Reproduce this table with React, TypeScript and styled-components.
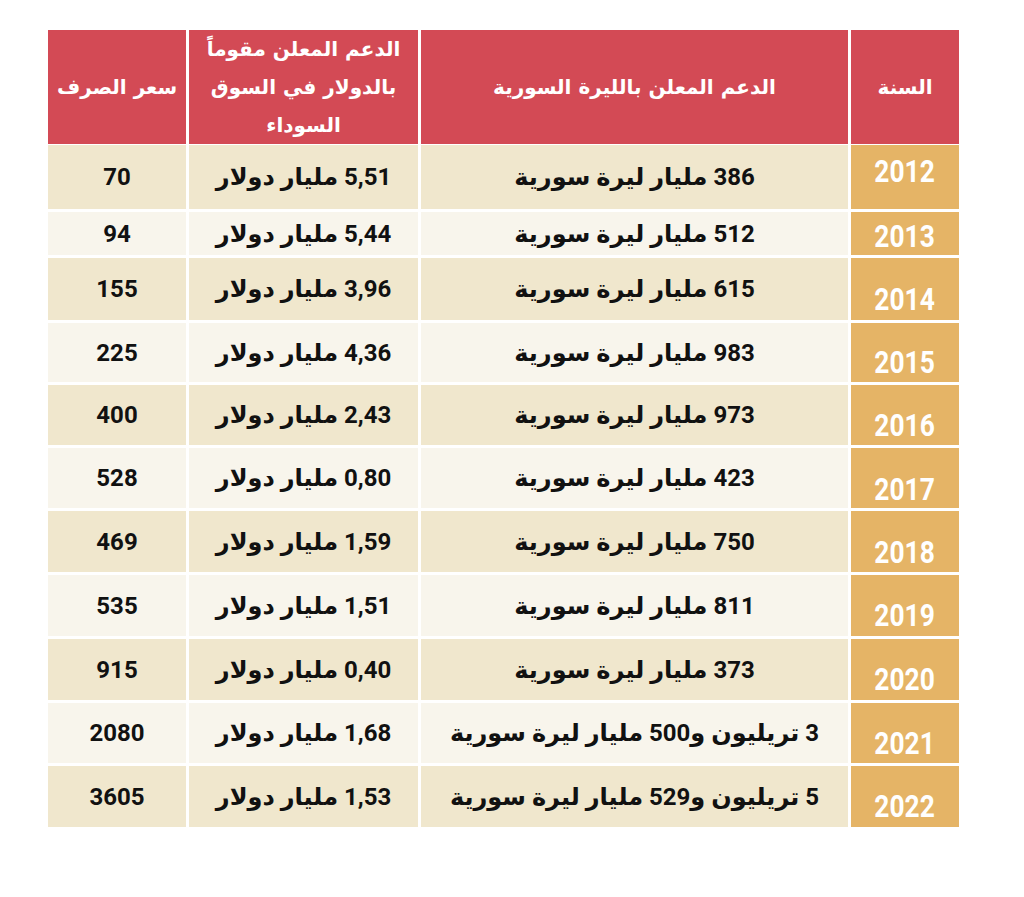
import React from "react";
import styled, { createGlobalStyle } from "styled-components";

const Global = createGlobalStyle`
  html, body { margin: 0; padding: 0; background: #ffffff; }
  body { font-family: Roboto, "DejaVu Sans", sans-serif; }
`;

const Page = styled.div`
  width: 1024px;
  height: 897px;
  padding: 30px 0 0 48px;
  box-sizing: border-box;
  background: #ffffff;
`;

const Table = styled.div`
  width: 911px;
  display: flex;
  flex-direction: column;
  gap: 3px;
  direction: rtl;
`;

const Row = styled.div<{ $h: number }>`
  display: grid;
  grid-template-columns: 108px 427px 229px 138px;
  column-gap: 3px;
  height: ${(p) => p.$h}px;
`;

const HeadCell = styled.div`
  background: #d34a55;
  color: #ffffff;
  display: flex;
  align-items: center;
  justify-content: center;
  text-align: center;
  font-family: "DejaVu Sans", sans-serif;
  font-weight: 700;
  font-size: 20px;
  line-height: 38px;
`;

const YearCell = styled.div<{ $shift: number }>`
  background: #e5b466;
  color: #ffffff;
  display: flex;
  align-items: center;
  justify-content: center;
  box-sizing: border-box;
  padding-top: ${(p) => (p.$shift > 0 ? p.$shift * 2 : 0)}px;
  padding-bottom: ${(p) => (p.$shift < 0 ? -p.$shift * 2 : 0)}px;
`;

const YearText = styled.span`
  display: inline-block;
  font-family: Roboto, sans-serif;
  font-weight: 700;
  font-size: 31px;
  line-height: 1;
  transform: scaleX(0.85);
`;

const DataCell = styled.div<{ $alt: boolean }>`
  background: ${(p) => (p.$alt ? "#f8f5ec" : "#f0e7cd")};
  color: #111111;
  display: flex;
  align-items: center;
  justify-content: center;
  font-family: Roboto, "DejaVu Sans", sans-serif;
  font-weight: 700;
  font-size: 24px;
  white-space: nowrap;
`;

type R = { year: string; syp: string; usd: string; rate: string; h: number; shift: number };

const rows: R[] = [
  { year: "2012", syp: "386 مليار ليرة سورية", usd: "5,51 مليار دولار", rate: "70", h: 64, shift: -6 },
  { year: "2013", syp: "512 مليار ليرة سورية", usd: "5,44 مليار دولار", rate: "94", h: 43, shift: 3 },
  { year: "2014", syp: "615 مليار ليرة سورية", usd: "3,96 مليار دولار", rate: "155", h: 62, shift: 10 },
  { year: "2015", syp: "983 مليار ليرة سورية", usd: "4,36 مليار دولار", rate: "225", h: 59, shift: 10 },
  { year: "2016", syp: "973 مليار ليرة سورية", usd: "2,43 مليار دولار", rate: "400", h: 60, shift: 10 },
  { year: "2017", syp: "423 مليار ليرة سورية", usd: "0,80 مليار دولار", rate: "528", h: 60, shift: 11 },
  { year: "2018", syp: "750 مليار ليرة سورية", usd: "1,59 مليار دولار", rate: "469", h: 61, shift: 11 },
  { year: "2019", syp: "811 مليار ليرة سورية", usd: "1,51 مليار دولار", rate: "535", h: 61, shift: 10 },
  { year: "2020", syp: "373 مليار ليرة سورية", usd: "0,40 مليار دولار", rate: "915", h: 61, shift: 10 },
  { year: "2021", syp: "3 تريليون و500 مليار ليرة سورية", usd: "1,68 مليار دولار", rate: "2080", h: 60, shift: 10 },
  { year: "2022", syp: "5 تريليون و529 مليار ليرة سورية", usd: "1,53 مليار دولار", rate: "3605", h: 61, shift: 10 },
];

export default function App() {
  return (
    <Page>
      <Global />
      <Table>
        <Row $h={112}>
          <HeadCell>السنة</HeadCell>
          <HeadCell>الدعم المعلن بالليرة السورية</HeadCell>
          <HeadCell>
            الدعم المعلن مقوماً
            <br />
            بالدولار في السوق
            <br />
            السوداء
          </HeadCell>
          <HeadCell>سعر الصرف</HeadCell>
        </Row>
        {rows.map((r, i) => (
          <Row key={r.year} $h={r.h}>
            <YearCell $shift={r.shift}>
              <YearText>{r.year}</YearText>
            </YearCell>
            <DataCell $alt={i % 2 === 1}>{r.syp}</DataCell>
            <DataCell $alt={i % 2 === 1}>{r.usd}</DataCell>
            <DataCell $alt={i % 2 === 1}>{r.rate}</DataCell>
          </Row>
        ))}
      </Table>
    </Page>
  );
}
